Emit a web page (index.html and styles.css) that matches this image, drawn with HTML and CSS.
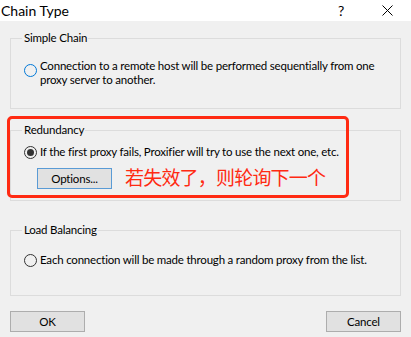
FILE: index.html
```html
<!DOCTYPE html>
<html lang="en">
<head>
    <meta charset="UTF-8">
    <title>Chain Type</title>
    <link rel="stylesheet" href="styles.css">
</head>
<body>
    <div class="dialog">
        <div class="title-bar">
            <span class="title">Chain Type</span>
            <span class="title-help">?</span>
            <span class="title-close">
                <svg width="11" height="11" viewBox="0 0 11 11"><path d="M0.5 0.5 L10.5 10.5 M10.5 0.5 L0.5 10.5" stroke="#000" stroke-width="1" fill="none"/></svg>
            </span>
        </div>

        <div class="content">
            <fieldset class="group group-simple">
                <legend>Simple Chain</legend>
                <label class="option option-top">
                    <span class="radio radio-focus"></span>
                    <span class="option-text">Connection to a remote host will be performed sequentially from one<br>proxy server to another.</span>
                </label>
            </fieldset>

            <fieldset class="group group-redundancy">
                <legend>Redundancy</legend>
                <label class="option">
                    <span class="radio radio-checked"></span>
                    <span class="option-text">If the first proxy fails, Proxifier will try to use the next one, etc.</span>
                </label>
                <div class="options-row">
                    <button class="btn btn-focus">Options...</button>
                    <span class="note">若失效了，则轮询下一个</span>
                </div>
            </fieldset>

            <fieldset class="group group-balance">
                <legend>Load Balancing</legend>
                <label class="option">
                    <span class="radio"></span>
                    <span class="option-text">Each connection will be made through a random proxy from the list.</span>
                </label>
            </fieldset>

            <div class="footer">
                <button class="btn">OK</button>
                <button class="btn">Cancel</button>
            </div>

            <div class="highlight"></div>
        </div>
    </div>
</body>
</html>
```

FILE: styles.css
```css
body {
    margin: 0;
    background-color: #f0f0f0;
    font-family: Lato, 'Noto Sans', sans-serif;
    font-size: 11.5px;
    letter-spacing: -0.2px;
    color: #000;
}
.dialog {
    width: 411px;
    height: 337px;
    overflow: hidden;
}
.title-bar {
    height: 21px;
    background-color: #fff;
    display: flex;
    align-items: center;
}
.title {
    font-size: 14px;
    letter-spacing: 0;
    margin-left: 1px;
    flex: 1;
}
.title-help {
    font-size: 14px;
    width: 12px;
    margin-right: 32px;
}
.title-close {
    display: flex;
    margin-right: 18px;
}
.content {
    position: relative;
    padding: 9px 10px 0;
}
.group {
    margin: 0;
    padding: 0 10px 0 13px;
    border: 1px solid #dcdcdc;
    min-width: 0;
}
.group legend {
    padding: 0 1px 0 2px;
    margin-left: -2px;
    line-height: 16px;
    height: 16px;
}
.group-simple {
    padding-top: 13px;
    padding-bottom: 21px;
}
.group-redundancy {
    margin-top: 13px;
    padding-top: 7px;
    padding-bottom: 11px;
}
.group-balance {
    margin-top: 21px;
    padding-top: 15px;
    padding-bottom: 28px;
}
.option {
    display: flex;
    align-items: center;
    gap: 3px;
    line-height: 14px;
    white-space: nowrap;
}
.option-top {
    align-items: flex-start;
}
.option-top .radio {
    margin-top: 5px;
}
.radio {
    width: 11px;
    height: 11px;
    border: 1px solid #333;
    border-radius: 50%;
    flex-shrink: 0;
    display: flex;
    align-items: center;
    justify-content: center;
}
.radio-focus {
    border-color: #0078d7;
}
.radio-checked::after {
    content: '';
    width: 7px;
    height: 7px;
    border-radius: 50%;
    background-color: #333;
}
.options-row {
    display: flex;
    align-items: center;
    height: 21px;
    margin-top: 9px;
    padding-left: 13px;
}
.btn {
    width: 75px;
    height: 21px;
    background-color: #e1e1e1;
    border: 1px solid #adadad;
    font-family: Lato, 'Noto Sans', sans-serif;
    font-size: 11.5px;
    letter-spacing: -0.2px;
    padding: 0;
    color: #000;
}
.btn-focus {
    border-color: #5a9bd5;
}
.note {
    margin-left: 13px;
    margin-bottom: 4px;
    font-family: 'Noto Sans CJK SC', sans-serif;
    font-size: 19px;
    line-height: 20px;
    letter-spacing: -0.8px;
    color: #ff2a12;
}
.footer {
    display: flex;
    justify-content: space-between;
    margin-top: 15px;
}
.highlight {
    position: absolute;
    left: 7px;
    top: 95px;
    width: 336px;
    height: 76px;
    border: 3px solid #ff2a12;
    border-radius: 5px;
}
```
